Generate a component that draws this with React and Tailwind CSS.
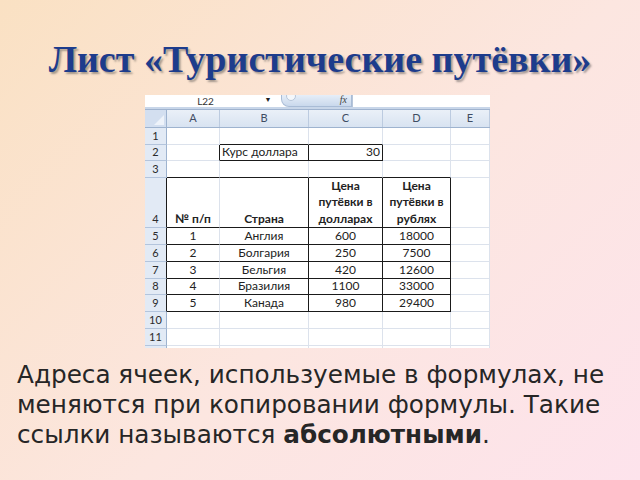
import React from "react";

const COLS = [53, 89, 74, 68, 39];
const LETTERS = ["A", "B", "C", "D", "E"];
const ROWH = [17, 16, 17, 50, 17, 17, 17, 16, 17, 17, 17];

const data = {
  2: { 1: { t: "Курс доллара", a: "left" }, 2: { t: "30", a: "right" } },
  4: {
    0: { t: "№ п/п", b: true, v: "bottom" },
    1: { t: "Страна", b: true, v: "bottom" },
    2: { t: ["Цена", "путёвки в", "долларах"], b: true },
    3: { t: ["Цена", "путёвки в", "рублях"], b: true },
  },
  5: { 0: { t: "1" }, 1: { t: "Англия" }, 2: { t: "600" }, 3: { t: "18000" } },
  6: { 0: { t: "2" }, 1: { t: "Болгария" }, 2: { t: "250" }, 3: { t: "7500" } },
  7: { 0: { t: "3" }, 1: { t: "Бельгия" }, 2: { t: "420" }, 3: { t: "12600" } },
  8: { 0: { t: "4" }, 1: { t: "Бразилия" }, 2: { t: "1100" }, 3: { t: "33000" } },
  9: { 0: { t: "5" }, 1: { t: "Канада" }, 2: { t: "980" }, 3: { t: "29400" } },
};

function bottomBlack(r, c) {
  if ((r === 1 || r === 2) && (c === 1 || c === 2)) return true;
  if (r >= 3 && r <= 9 && c <= 3) return true;
  return false;
}
function rightBlack(r, c) {
  if (r === 2 && c <= 2) return true;
  if (r >= 4 && r <= 9 && c >= 1 && c <= 3) return true;
  return false;
}

function Cell({ r, c, w }) {
  const d = (data[r] || {})[c];
  const bb = bottomBlack(r, c);
  const rb = rightBlack(r, c);
  const cls = [
    "flex shrink-0 px-[2px] text-[12px] leading-[16.5px] text-[#222]",
    bb ? "border-b border-b-[#1a1a1a]" : "border-b border-b-[#dce2ec]",
    rb ? "border-r border-r-[#1a1a1a]" : "border-r border-r-[#dce2ec]",
  ];
  if (d) {
    if (d.a === "left") cls.push("justify-start");
    else if (d.a === "right") cls.push("justify-end");
    else cls.push("justify-center");
    if (d.v === "bottom") cls.push("items-end");
    else cls.push("items-center");
    if (d.b) cls.push("font-bold");
  }
  return (
    <div className={cls.join(" ")} style={{ width: w }}>
      {d &&
        (Array.isArray(d.t) ? (
          <div className="flex flex-col items-center">
            {d.t.map((l, i) => (
              <span key={i} className="whitespace-nowrap">
                {l}
              </span>
            ))}
          </div>
        ) : (
          <span className="whitespace-nowrap">{d.t}</span>
        ))}
    </div>
  );
}

function Sheet() {
  return (
    <div
      className="w-[345px] h-[253px] overflow-hidden bg-white flex flex-col"
      style={{ fontFamily: "Lato, 'Noto Sans', sans-serif" }}
    >
      {/* formula bar */}
      <div className="flex h-[12px] shrink-0 bg-white overflow-hidden">
        <div className="w-[117px] flex justify-center">
          <span className="text-[10px] leading-[10px] mt-[1px] ml-[4px] text-[#333]">L22</span>
        </div>
        <div className="w-[12px] flex items-start justify-center">
          <span className="text-[7px] leading-[8px] text-[#222]">▼</span>
        </div>
        <div className="w-[7px]" />
        <div className="w-[71px] rounded-bl-[8px] bg-[linear-gradient(180deg,#e6eef8,#c9d8ec)] border border-t-0 border-[#a9bcd6] flex items-start justify-between pl-[4px] pr-[4px]">
          <div className="w-[10px] h-[10px] -mt-[4px] rounded-full bg-[#f4f7fb] border border-[#b7c6da]" />
          <span className="italic text-[10px] leading-[10px] text-[#444]" style={{ fontFamily: "'Liberation Serif', serif" }}>
            fx
          </span>
        </div>
        <div className="flex-1 bg-white border-l border-[#b7c6da]" />
      </div>
      <div className="h-[3px] shrink-0 bg-[#c8d6e9] border-b border-[#9fb3cf]" />
      {/* column header */}
      <div className="flex h-[18px] shrink-0 bg-[linear-gradient(180deg,#eaf0f8,#d8e3f1)] border-b border-[#9eb3cf]">
        <div className="w-[22px] shrink-0 relative bg-[#d3dff0] border-r border-[#9eb3cf]">
          <div className="absolute right-[2px] bottom-[2px] w-0 h-0 border-l-[10px] border-l-transparent border-b-[10px] border-b-[#eef3fa]" />
        </div>
        {COLS.map((w, i) => (
          <div
            key={i}
            className="shrink-0 flex items-center justify-center border-r border-[#bccbe0] text-[11px] text-[#3f4c63]"
            style={{ width: w }}
          >
            {LETTERS[i]}
          </div>
        ))}
      </div>
      {/* rows */}
      {ROWH.map((h, ri) => {
        const r = ri + 1;
        const hb = r >= 4 && r <= 9;
        return (
          <div key={r} className="flex shrink-0" style={{ height: h }}>
            <div
              className={
                "w-[22px] shrink-0 flex items-end justify-center pb-[1px] bg-[#e2eaf5] border-b border-b-[#b3c4dc] text-[11px] leading-[14px] text-[#2b2b2b] " +
                (hb ? "border-r border-r-[#1a1a1a]" : "border-r border-r-[#9eb3cf]")
              }
            >
              {r}
            </div>
            {COLS.map((w, c) => (
              <Cell key={c} r={r} c={c} w={w} />
            ))}
          </div>
        );
      })}
      <div className="flex flex-1">
        <div className="w-[22px] shrink-0 bg-[#e2eaf5] border-r border-[#9eb3cf]" />
        {COLS.map((w, i) => (
          <div key={i} className="shrink-0 border-r border-[#dce2ec]" style={{ width: w }} />
        ))}
      </div>
    </div>
  );
}

export default function App() {
  return (
    <div className="w-[640px] h-[480px] overflow-hidden bg-[linear-gradient(135deg,#fae1c3_0%,#fce6e0_55%,#fde3ec_100%)] flex flex-col">
      <h1
        className="mt-[40px] h-[38px] text-center text-[38px] leading-[38px] font-bold text-[#1d3c8c] [text-shadow:2px_2px_2px_rgba(60,60,60,0.45)] whitespace-nowrap"
        style={{ fontFamily: "'Liberation Serif', 'DejaVu Serif', serif" }}
      >
        Лист «Туристические путёвки»
      </h1>
      <div className="mt-[17px] ml-[145px]">
        <Sheet />
      </div>
      <p
        className="mt-[12px] ml-[17px] text-[24.7px] leading-[30px] text-[#262626] whitespace-nowrap"
        style={{ fontFamily: "'DejaVu Sans', sans-serif" }}
      >
        Адреса ячеек, используемые в формулах, не
        <br />
        меняются при копировании формулы. Такие
        <br />
        ссылки называются <b className="font-bold">абсолютными</b>.
      </p>
    </div>
  );
}
